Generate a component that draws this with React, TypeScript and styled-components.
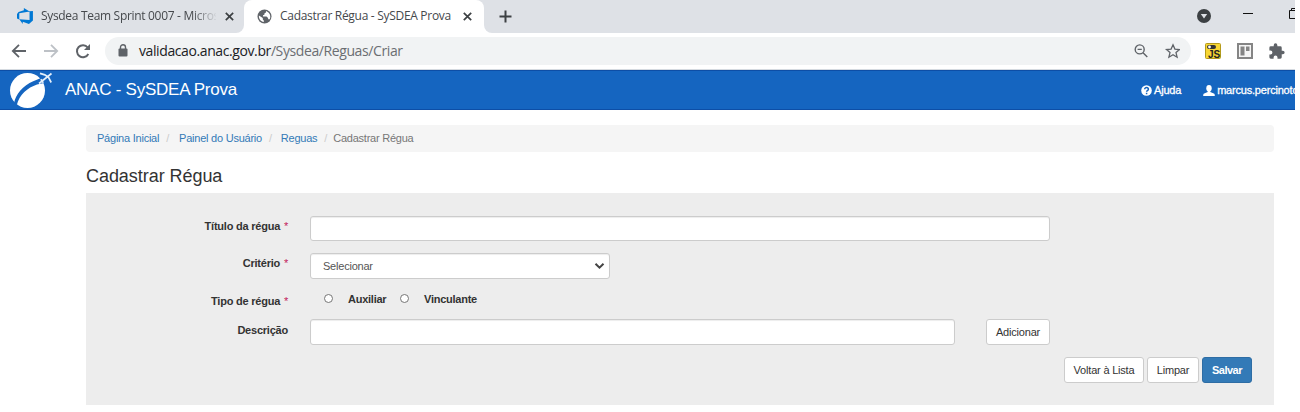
import React from 'react';
import styled, { createGlobalStyle, css } from 'styled-components';

const Global = createGlobalStyle`
  * { box-sizing: border-box; }
  body { margin: 0; background: #fff; overflow: hidden; font-family: "Liberation Sans", Arial, sans-serif; font-size: 11px; color: #333; }
  button, input { font-family: inherit; }
`;

const Window = styled.div`
  width: 1295px;
  height: 405px;
  overflow: hidden;
  background: #fff;
`;

const TabStrip = styled.div`
  display: flex;
  height: 33px;
  background: #dee1e6;
  font-family: "Open Sans", sans-serif;
  font-size: 12px;
  color: #45484c;
`;

const Tab = styled.div<{ $active?: boolean }>`
  display: flex;
  align-items: center;
  height: 33px;
  width: ${p => (p.$active ? 240 : 244)}px;
  padding: 0 10px 1px ${p => (p.$active ? 13 : 17)}px;
  background: ${p => (p.$active ? '#fff' : '#dee1e6')};
  border-radius: ${p => (p.$active ? '8px 8px 0 0' : '0 0 8px 0')};
`;

const TabSlot = styled.div<{ $grow?: boolean }>`
  display: flex;
  flex: ${p => (p.$grow ? '1' : 'none')};
  background: #fff;
`;

const TabText = styled.span<{ $fade?: boolean; $width: number; $spacing: number }>`
  width: ${p => p.$width}px;
  margin: 0 9px 0 8px;
  white-space: nowrap;
  overflow: hidden;
  line-height: 18px;
  letter-spacing: ${p => p.$spacing}px;
  ${p => p.$fade && css`mask-image: linear-gradient(90deg, #000 86%, transparent 101%);`}
`;

const StripRest = styled.div`
  display: flex;
  flex: 1;
  align-items: center;
  background: #dee1e6;
  border-radius: 0 0 0 8px;
  padding: 0 0 1px 15px;
`;

const WindowControls = styled.div`
  display: flex;
  align-items: center;
  margin-left: auto;
`;

const Toolbar = styled.div`
  display: flex;
  align-items: center;
  height: 37px;
  padding: 0 0 1px 11px;
  border-bottom: 1px solid #d5dae0;
`;

const NavIcon = styled.svg`
  margin-right: 16px;
  flex: none;
`;

const AddressBar = styled.div`
  display: flex;
  align-items: center;
  width: 1086px;
  height: 28px;
  margin-left: -2px;
  padding: 0 11px 0 13px;
  border-radius: 14px;
  background: #f1f3f4;
`;

const Url = styled.span`
  flex: 1;
  margin-left: 11px;
  font-family: "Open Sans", sans-serif;
  font-size: 14px;
  line-height: 20px;
  letter-spacing: -0.4px;
  color: #6b6e72;
  b { font-weight: 400; color: #202124; }
`;

const Extensions = styled.div`
  display: flex;
  align-items: center;
  gap: 16px;
  margin-left: 14px;
`;

const AppBar = styled.header`
  display: flex;
  align-items: center;
  height: 40px;
  padding-left: 9px;
  background: #1565c0;
  border-top: 1px solid #0d4ea6;
  border-bottom: 1px solid #0d4ea6;
  color: #fff;
  white-space: nowrap;
`;

const Brand = styled.span`
  margin-left: 12px;
  font-size: 17px;
  letter-spacing: -0.25px;
  line-height: 20px;
`;

const UserMenu = styled.nav`
  display: flex;
  align-items: center;
  width: 154px;
  margin-left: auto;
  font-size: 11px;
`;

const MenuItem = styled.span<{ $left?: number }>`
  display: flex;
  align-items: center;
  gap: 2px;
  margin-left: ${p => p.$left ?? 0}px;
  letter-spacing: -0.2px;
  -webkit-text-stroke: 0.3px #fff;
`;

const Content = styled.main`
  padding: 15px 21px 0 86px;
`;

const Breadcrumb = styled.nav`
  display: flex;
  align-items: center;
  height: 27px;
  padding: 0 0 1px 11px;
  border-radius: 4px;
  background: #f5f5f5;
  color: #777;
  letter-spacing: -0.23px;
`;

const Crumb = styled.a`
  color: #337ab7;
`;

const Slash = styled.span<{ $after: number }>`
  color: #ccc;
  margin: 0 ${p => p.$after}px 0 7px;
`;

const Title = styled.h1`
  margin: 14px 0 7px;
  font-size: 18px;
  line-height: 20px;
  font-weight: 400;
  letter-spacing: -0.05px;
`;

const Panel = styled.form`
  height: 212px;
  padding: 23px 22px 0 0;
  background: #ededed;
`;

const Row = styled.div<{ $height: number; $gap: number }>`
  display: flex;
  height: ${p => p.$height}px;
  margin-bottom: ${p => p.$gap}px;
`;

const Label = styled.label<{ $drop?: boolean }>`
  width: 202px;
  margin-right: 22px;
  padding-top: ${p => (p.$drop ? 5 : 4)}px;
  line-height: 13px;
  text-align: right;
  font-weight: 700;
  letter-spacing: -0.22px;
  i { margin-left: 1px; color: #c2185b; font-style: normal; font-weight: 400; }
`;

const field = css`
  border: 1px solid #ccc;
  border-radius: 3px;
  background: #fff;
  box-shadow: inset 0 1px 1px rgba(0, 0, 0, 0.075);
`;

const TextInput = styled.input<{ $width: number }>`
  ${field}
  width: ${p => p.$width}px;
  height: 100%;
  padding: 0 12px;
  outline: none;
`;

const Select = styled.div`
  ${field}
  display: flex;
  align-items: center;
  justify-content: space-between;
  width: 300px;
  height: 26px;
  padding: 0 4px 0 12px;
  color: #555;
  letter-spacing: -0.22px;
`;

const RadioGroup = styled.div`
  display: flex;
  align-items: center;
  height: 15px;
  padding-left: 14px;
  font-weight: 700;
  letter-spacing: -0.25px;
`;

const Radio = styled.span`
  width: 9px;
  height: 9px;
  border: 1px solid #767676;
  border-radius: 50%;
  background: #fff;
`;

const RadioText = styled.span<{ $width: number }>`
  width: ${p => p.$width}px;
  margin-left: 15px;
`;

const Button = styled.button<{ $width: number; $primary?: boolean; $left?: number }>`
  width: ${p => p.$width}px;
  height: 26px;
  margin-left: ${p => p.$left ?? 0}px;
  padding: 0 0 1px;
  border: 1px solid ${p => (p.$primary ? '#2e6da4' : '#ccc')};
  border-radius: 3px;
  background: ${p => (p.$primary ? '#337ab7' : '#fff')};
  color: ${p => (p.$primary ? '#fff' : '#333')};
  font-size: 11px;
  font-weight: ${p => (p.$primary ? 700 : 400)};
  letter-spacing: ${p => (p.$primary ? -0.5 : -0.2)}px;
  white-space: nowrap;
`;

const Actions = styled.div`
  display: flex;
  justify-content: flex-end;
  gap: 3px;
`;

const CloseIcon = () => (
  <svg width="9" height="9" viewBox="0 0 9 9" stroke="#3c4043" strokeWidth="1.7">
    <path d="M.8.8l7.4 7.4M8.2.8L.8 8.2" />
  </svg>
);

const DevOpsIcon = () => (
  <svg width="16" height="16" viewBox="0 0 16 16">
    <path fill="#0078d4" d="M16 2.900v9.700L12 16l-6.200-2.100V16L2.300 11.300l10.300.8V3.300zM12.700 3.400L6.900 0v2.300L1.600 3.900 0 5.900v4.600l2.300 1V5.200z" />
  </svg>
);

const GlobeIcon = () => (
  <svg width="15" height="15" viewBox="0 0 15 15">
    <circle cx="7.5" cy="7.5" r="7" fill="#5f6368" />
    <path fill="#fff" d="M9 1.900L8.900 3.400 7.400 4.500v1.200L6 6.200v1.200h3.500l1.600 1.600v1.300h1.600c1.500-3.400.2-6.700-3.700-8.400zM1.900 6.600C1.600 10 4 12.800 6.800 13.100v-1.600l-1-1V9z" />
  </svg>
);

const Logo = () => (
  <svg width="44" height="38" viewBox="0 0 44 38">
    <circle cx="18.500" cy="19.500" r="17.500" fill="#fff" />
    <path d="M5 32.500C6.500 23.600 14.100 14.500 24.200 10.300L32 7l3 5-7 1.600C18.400 16.900 10.500 23.500 7.800 34z" fill="#1565c0" />
    <path d="M30 12.500L42.500 2.500M31 2.400l4.800 1.500 3.600 2.300 2.800 5.300M31.800 8.300l2.500 3.400" fill="none" stroke="#e6f0fb" strokeWidth="1.700" />
  </svg>
);

export default function App() {
  return (
    <Window>
      <Global />
      <TabStrip>
        <TabSlot>
          <Tab>
            <DevOpsIcon />
            <TabText $fade $width={176} $spacing={-0.31}>Sysdea Team Sprint 0007 - Micros</TabText>
            <CloseIcon />
          </Tab>
        </TabSlot>
        <Tab $active>
          <GlobeIcon />
          <TabText $width={174} $spacing={-0.3}>Cadastrar Régua - SySDEA Prova</TabText>
          <CloseIcon />
        </Tab>
        <TabSlot $grow>
          <StripRest>
            <svg width="13" height="13" viewBox="0 0 13 13" stroke="#3c4043" strokeWidth="2">
              <path d="M6.500.5v12M.5 6.500h12" />
            </svg>
            <WindowControls>
              <svg width="98" height="20" viewBox="0 0 98 20">
                <circle cx="7" cy="10" r="7" fill="#3c4043" />
                <path d="M3.800 8h6.400L7 12.400z" fill="#dee1e6" />
                <path d="M46 7.500h10" stroke="#111" />
                <path d="M92.500 4.500h9v8h-9zM94.500 4V2.500h8" fill="none" stroke="#111" />
              </svg>
            </WindowControls>
          </StripRest>
        </TabSlot>
      </TabStrip>
      <Toolbar>
        <NavIcon width="16" height="16" viewBox="0 0 16 16" fill="none" stroke="#5f6368" strokeWidth="1.800"><path d="M15 8H2M8 1.800L1.800 8 8 14.200" /></NavIcon>
        <NavIcon width="16" height="16" viewBox="0 0 16 16" fill="none" stroke="#bdc1c6" strokeWidth="1.800"><path d="M1 8h13M8 1.800L14.200 8 8 14.200" /></NavIcon>
        <NavIcon width="16" height="16" viewBox="0 0 16 16" fill="none"><path d="M13.300 11a6 6 0 1 1-.6-6.500" stroke="#5f6368" strokeWidth="2" /><path d="M15 1v6H9z" fill="#5f6368" /></NavIcon>
        <AddressBar>
          <svg width="10" height="13" viewBox="0 0 10 13"><rect x=".5" y="4.500" width="9" height="8" rx="1" fill="#5f6368" /><path d="M2.500 5V3.200a2.500 2.500 0 0 1 5 0V5" fill="none" stroke="#5f6368" strokeWidth="1.400" /></svg>
          <Url><b>validacao.anac.gov.br</b>/Sysdea/Reguas/Criar</Url>
          <svg width="46" height="16" viewBox="0 0 46 16" fill="none" stroke="#5f6368" strokeWidth="1.400">
            <circle cx="5.700" cy="6.400" r="4.500" /><path d="M9 9.800l4.300 4.200M3.600 6.400h4.200" />
            <path d="M39 1.800l1.900 4.300 4.600.4-3.500 3.100 1.100 4.600-4.100-2.500-4.100 2.500 1.100-4.600-3.500-3.100 4.600-.4z" strokeWidth="1.300" />
          </svg>
        </AddressBar>
        <Extensions>
          <svg width="16" height="16" viewBox="0 0 16 16">
            <rect x=".5" y=".5" width="15" height="15" rx="1" fill="#f7d633" stroke="#b59a1c" />
            <rect x="2" y="2" width="9" height="4" rx="2" fill="#333" /><circle cx="4.500" cy="4" r="1.400" fill="#fff" />
            <text x="3" y="14.600" fontSize="10" fontWeight="700" fontFamily="Liberation Sans" fill="#222">JS</text>
          </svg>
          <svg width="16" height="16" viewBox="0 0 16 16"><rect x="1" y="1" width="14" height="14" fill="#f5f5f5" stroke="#858585" strokeWidth="2" /><path d="M3.500 3.500h4v9h-4zM9 3.500h3.500V8H9z" fill="#858585" /></svg>
          <svg width="16" height="16" viewBox="1.500 0.500 22 22" fill="#5f6368"><path d="M20.500 11H19V7a2 2 0 0 0-2-2h-4V3.500a2.500 2.500 0 0 0-5 0V5H4a2 2 0 0 0-2 2v3.800h1.500a2.700 2.700 0 0 1 0 5.400H2V20a2 2 0 0 0 2 2h3.800v-1.500a2.700 2.700 0 0 1 5.400 0V22H17a2 2 0 0 0 2-2v-4h1.500a2.500 2.500 0 0 0 0-5z" /></svg>
        </Extensions>
      </Toolbar>
      <AppBar>
        <Logo />
        <Brand>ANAC - SySDEA Prova</Brand>
        <UserMenu>
          <MenuItem>
            <svg width="11" height="11" viewBox="0 0 11 11"><circle cx="5.500" cy="5.500" r="5.300" fill="#fff" /><path d="M3.700 4.300c0-2.400 3.700-2.200 3.700 0 0 1.300-1.800 1.300-1.800 2.500M5.600 7.700v1.500" fill="none" stroke="#1565c0" strokeWidth="1.500" /></svg>
            Ajuda
          </MenuItem>
          <MenuItem $left={22}>
            <svg width="12" height="11" viewBox="0 0 12 11"><ellipse cx="6" cy="3.300" rx="2.700" ry="3.300" fill="#fff" /><path d="M4.700 5h2.600v2l3.500 1.500c.8.400 1 1 1 2.500H.2c0-1.500.2-2.100 1-2.500L4.700 7z" fill="#fff" /></svg>
            marcus.percinoto
          </MenuItem>
        </UserMenu>
      </AppBar>
      <Content>
        <Breadcrumb>
          <Crumb>Página Inicial</Crumb><Slash $after={10}>/</Slash>
          <Crumb>Painel do Usuário</Crumb><Slash $after={9}>/</Slash>
          <Crumb>Reguas</Crumb><Slash $after={6}>/</Slash>
          <span>Cadastrar Régua</span>
        </Breadcrumb>
        <Title>Cadastrar Régua</Title>
        <Panel>
          <Row $height={25} $gap={12}>
            <Label>Título da régua <i>*</i></Label>
            <TextInput $width={740} />
          </Row>
          <Row $height={26} $gap={12}>
            <Label>Critério <i>*</i></Label>
            <Select>
              Selecionar
              <svg width="11" height="8" viewBox="0 0 11 8" fill="none" stroke="#444" strokeWidth="2"><path d="M1.500 1.700l4 4 4-4" /></svg>
            </Select>
          </Row>
          <Row $height={16} $gap={12}>
            <Label>Tipo de régua <i>*</i></Label>
            <RadioGroup>
              <Radio /><RadioText $width={52}>Auxiliar</RadioText>
              <Radio /><RadioText $width={60}>Vinculante</RadioText>
            </RadioGroup>
          </Row>
          <Row $height={26} $gap={12}>
            <Label $drop>Descrição</Label>
            <TextInput $width={645} />
            <Button type="button" $width={64} $left={31}>Adicionar</Button>
          </Row>
          <Actions>
            <Button type="button" $width={80}>Voltar à Lista</Button>
            <Button type="button" $width={52}>Limpar</Button>
            <Button type="button" $width={50} $primary>Salvar</Button>
          </Actions>
        </Panel>
      </Content>
    </Window>
  );
}
